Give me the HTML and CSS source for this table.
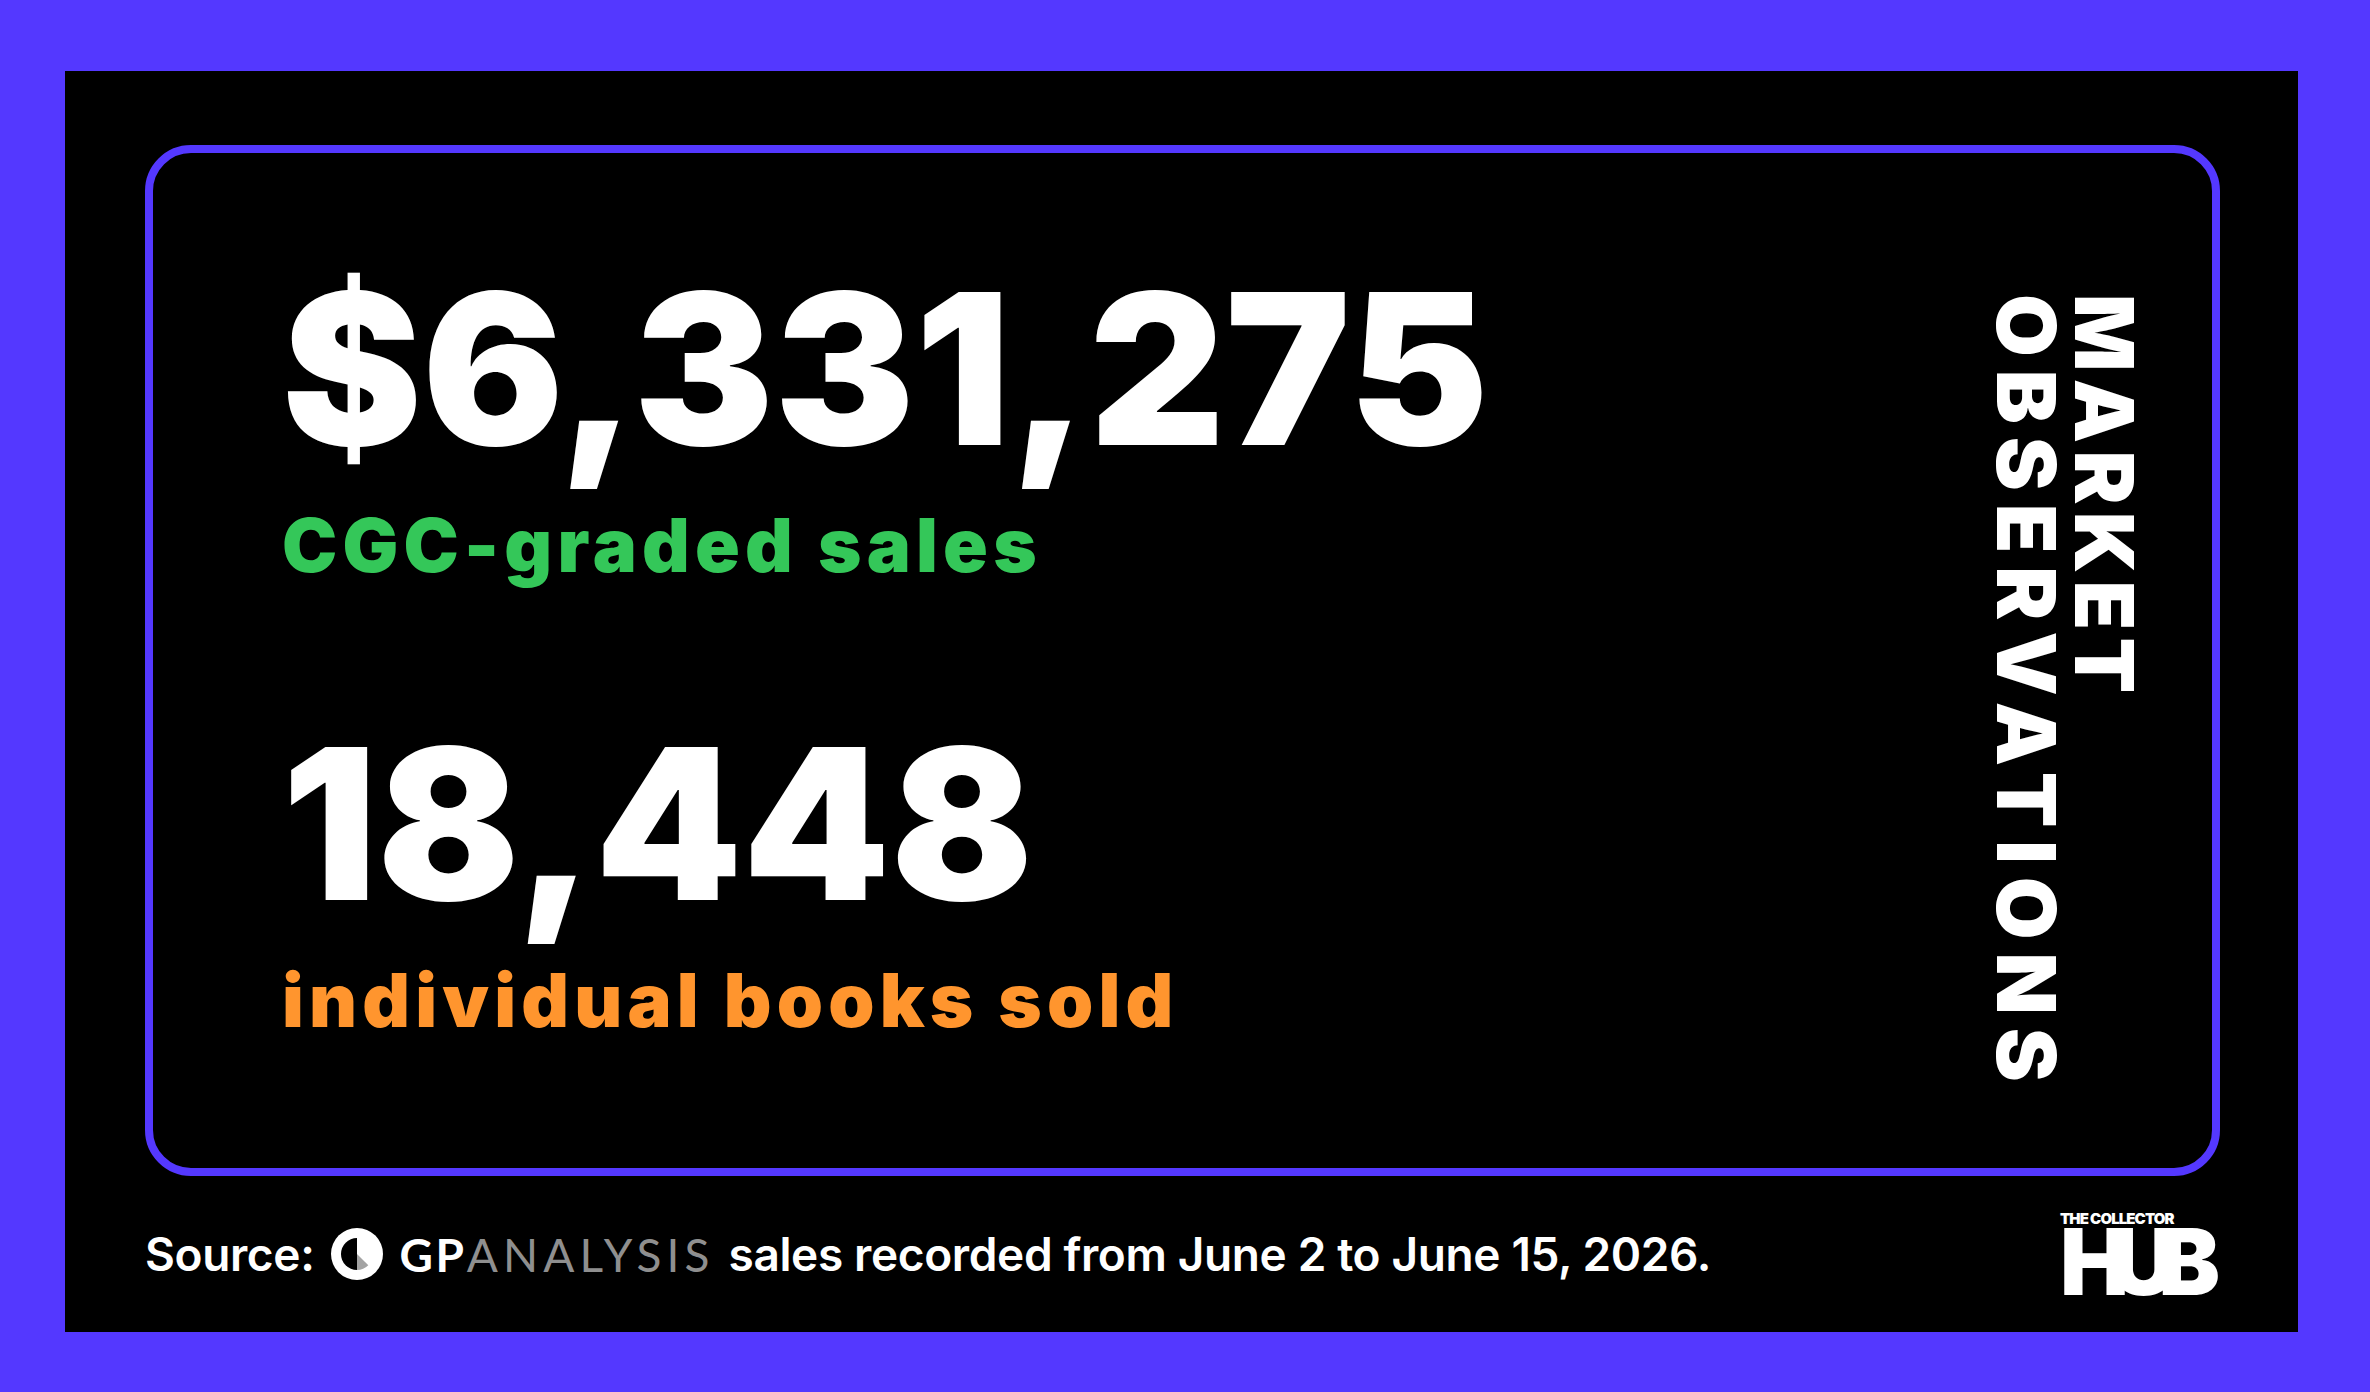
FILE: index.html
```html
<!DOCTYPE html>
<html lang="en">
<head>
<meta charset="utf-8">
<title>Market Observations</title>
<link rel="stylesheet" href="styles.css">
</head>
<body>
  <div class="panel">
    <section class="card">
      <div class="stats">
        <div class="stat">
          <div class="num">$6,331,275</div>
          <div class="label green">CGC-graded sales</div>
        </div>
        <div class="stat">
          <div class="num">18,448</div>
          <div class="label orange">individual books sold</div>
        </div>
      </div>
      <h1 class="title"><span class="t1">MARKET</span><br><span class="t2">OBSERVATIONS</span></h1>
    </section>
    <footer class="footer">
      <p class="source">
        <span class="src-label">Source:</span>
        <svg class="gp-icon" viewBox="0 0 52 52" width="52" height="52" aria-hidden="true">
          <circle cx="26" cy="26" r="26" fill="#fff"/>
          <path d="M26 10 A16 16 0 0 0 26 42 Z" fill="#000"/>
          <path d="M26 26 L26 42 A16 16 0 0 0 37.3 37.3 Z" fill="#a3a3a3"/>
        </svg>
        <span class="gp">GP<span class="analysis">ANALYSIS</span></span>
        <span class="src-text">sales recorded from June 2 to June 15, 2026.</span>
      </p>
      <div class="hub">
        <div class="hub-small">THE COLLECTOR</div>
        <div class="hub-big">HUB</div>
      </div>
    </footer>
  </div>
</body>
</html>
```
FILE: styles.css
```css
html, body {
  margin: 0;
}
body {
  width: 2370px;
  height: 1392px;
  box-sizing: border-box;
  padding: 71px 72px 60px 65px;
  background: #5438ff;
  font-family: Inter, "Noto Sans", sans-serif;
  color: #fff;
  overflow: hidden;
}
.panel {
  height: 100%;
  box-sizing: border-box;
  background: #000;
  padding: 74px 78px 0 80px;
  display: flex;
  flex-direction: column;
}
.card {
  flex: 1;
  box-sizing: border-box;
  border: 8px solid #5438ff;
  border-radius: 46px;
  padding: 111px 69px 0 129px;
  display: flex;
  justify-content: space-between;
  align-items: flex-start;
}
.stats {
  display: flex;
  flex-direction: column;
  gap: 137px;
}
.stat {
  display: flex;
  flex-direction: column;
  gap: 34px;
}
.num {
  font-size: 210px;
  font-weight: 900;
  line-height: 1;
  letter-spacing: 0.002em;
}
.label {
  font-size: 74px;
  font-weight: 900;
  line-height: 1;
  letter-spacing: 0.07em;
}
.green { color: #34c759; }
.orange { color: #ff952e; }
.title {
  margin: 30px 0 0;
  writing-mode: vertical-rl;
  font-size: 81px;
  font-weight: 900;
  line-height: 78px;
}
.t1 {
  letter-spacing: 0.09em;
}
.t2 {
  letter-spacing: 0.16em;
}
.footer {
  height: 156px;
  flex: none;
  display: flex;
  align-items: center;
  justify-content: space-between;
}
.source {
  margin: 0;
  display: flex;
  align-items: center;
  font-size: 46px;
  font-weight: 600;
  letter-spacing: -0.008em;
  white-space: nowrap;
}
.gp-icon {
  margin: 0 16px 0 17px;
  flex: none;
}
.gp {
  font-family: Lato, sans-serif;
  font-weight: 700;
  letter-spacing: 0.06em;
  margin-right: 14px;
}
.analysis {
  font-weight: 400;
  color: #8f8f8f;
  letter-spacing: 0.11em;
}
.hub {
  display: flex;
  flex-direction: column;
  align-items: flex-start;
  gap: 4px;
  font-weight: 900;
}
.hub-small {
  font-size: 15px;
  line-height: 11px;
  letter-spacing: -0.06em;
}
.hub-big {
  font-size: 92px;
  line-height: 67px;
  letter-spacing: -0.2em;
  padding-right: 0.2em;
}
```
